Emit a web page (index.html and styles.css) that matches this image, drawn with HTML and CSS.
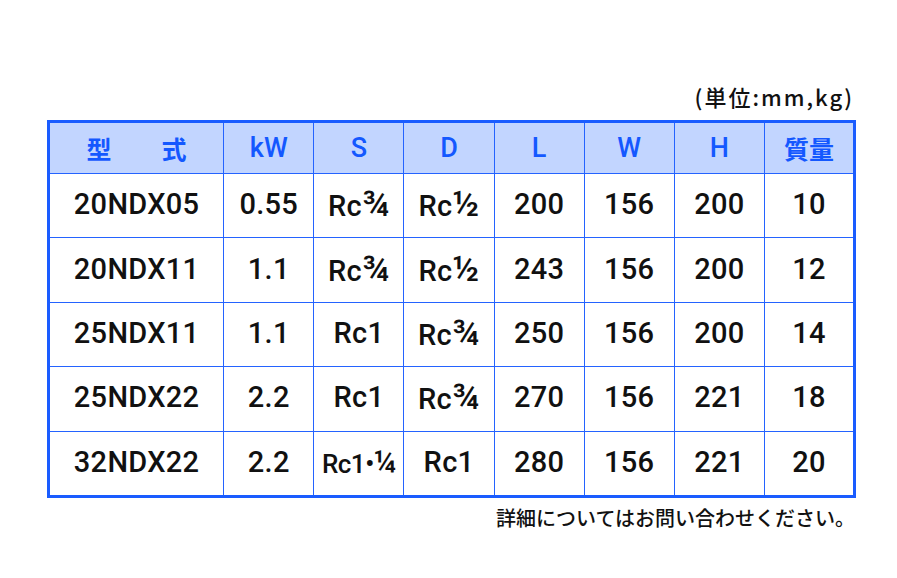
FILE: index.html
```html
<!DOCTYPE html>
<html lang="ja">
<head>
<meta charset="utf-8">
<link rel="stylesheet" href="styles.css">
</head>
<body>
<div class="page">
  <div class="unit">(単位:mm,kg)</div>
  <table class="spec">
    <colgroup>
      <col class="c-model"><col class="c-n"><col class="c-n"><col class="c-n"><col class="c-n"><col class="c-n"><col class="c-n"><col class="c-n">
    </colgroup>
    <thead>
      <tr><th class="jp">型　　式</th><th>kW</th><th>S</th><th>D</th><th>L</th><th>W</th><th>H</th><th class="jp">質量</th></tr>
    </thead>
    <tbody>
      <tr><td>20NDX05</td><td>0.55</td><td>Rc<span class="fr">¾</span></td><td>Rc<span class="fr">½</span></td><td>200</td><td>156</td><td>200</td><td>10</td></tr>
      <tr><td>20NDX11</td><td>1.1</td><td>Rc<span class="fr">¾</span></td><td>Rc<span class="fr">½</span></td><td>243</td><td>156</td><td>200</td><td>12</td></tr>
      <tr><td>25NDX11</td><td>1.1</td><td>Rc1</td><td>Rc<span class="fr">¾</span></td><td>250</td><td>156</td><td>200</td><td>14</td></tr>
      <tr><td>25NDX22</td><td>2.2</td><td>Rc1</td><td>Rc<span class="fr">¾</span></td><td>270</td><td>156</td><td>221</td><td>18</td></tr>
      <tr><td>32NDX22</td><td>2.2</td><td class="tight">Rc1•<span class="fr">¼</span></td><td>Rc1</td><td>280</td><td>156</td><td>221</td><td>20</td></tr>
    </tbody>
  </table>
  <div class="note">詳細についてはお問い合わせください。</div>
</div>
</body>
</html>
```
FILE: styles.css
```css
html, body {
  margin: 0;
  padding: 0;
  background: #ffffff;
}
.page {
  width: 897px;
  height: 578px;
  padding: 81px 0 0 47px;
  box-sizing: border-box;
  font-family: Roboto, "Noto Sans CJK JP", sans-serif;
}
.unit {
  width: 807px;
  text-align: right;
  font-family: "Noto Sans CJK JP", sans-serif;
  font-weight: 500;
  font-size: 22px;
  letter-spacing: 2px;
  line-height: 30px;
  height: 39px;
  color: #111;
}
.spec {
  border-collapse: collapse;
  table-layout: fixed;
  width: 809px;
  border: 3px solid #1a5cff;
}
.c-model { width: 175px; }
.c-n { width: 90px; }
.spec th, .spec td {
  border: 1px solid #2463ff;
  text-align: center;
  padding: 0;
  white-space: nowrap;
}
.spec th {
  background: #c2d5ff;
  color: #1458ff;
  height: 50px;
  font-size: 27px;
  font-weight: 500;
}
.spec th.jp {
  font-family: "Noto Sans CJK JP", sans-serif;
  font-weight: 700;
  font-size: 25px;
}
.spec td {
  height: 61.4px;
  line-height: 1;
  font-size: 29px;
  font-weight: 500;
  color: #111;
  letter-spacing: 0.3px;
  padding-bottom: 2px;
}
.fr {
  font-size: 1.2em;
  line-height: 1;
}
.spec td.tight {
  font-size: 26px;
  letter-spacing: -0.5px;
}
.note {
  width: 808px;
  text-align: right;
  font-family: "Noto Sans CJK JP", sans-serif;
  font-weight: 500;
  font-size: 20px;
  line-height: 26px;
  margin-top: 7px;
  color: #111;
}
```
